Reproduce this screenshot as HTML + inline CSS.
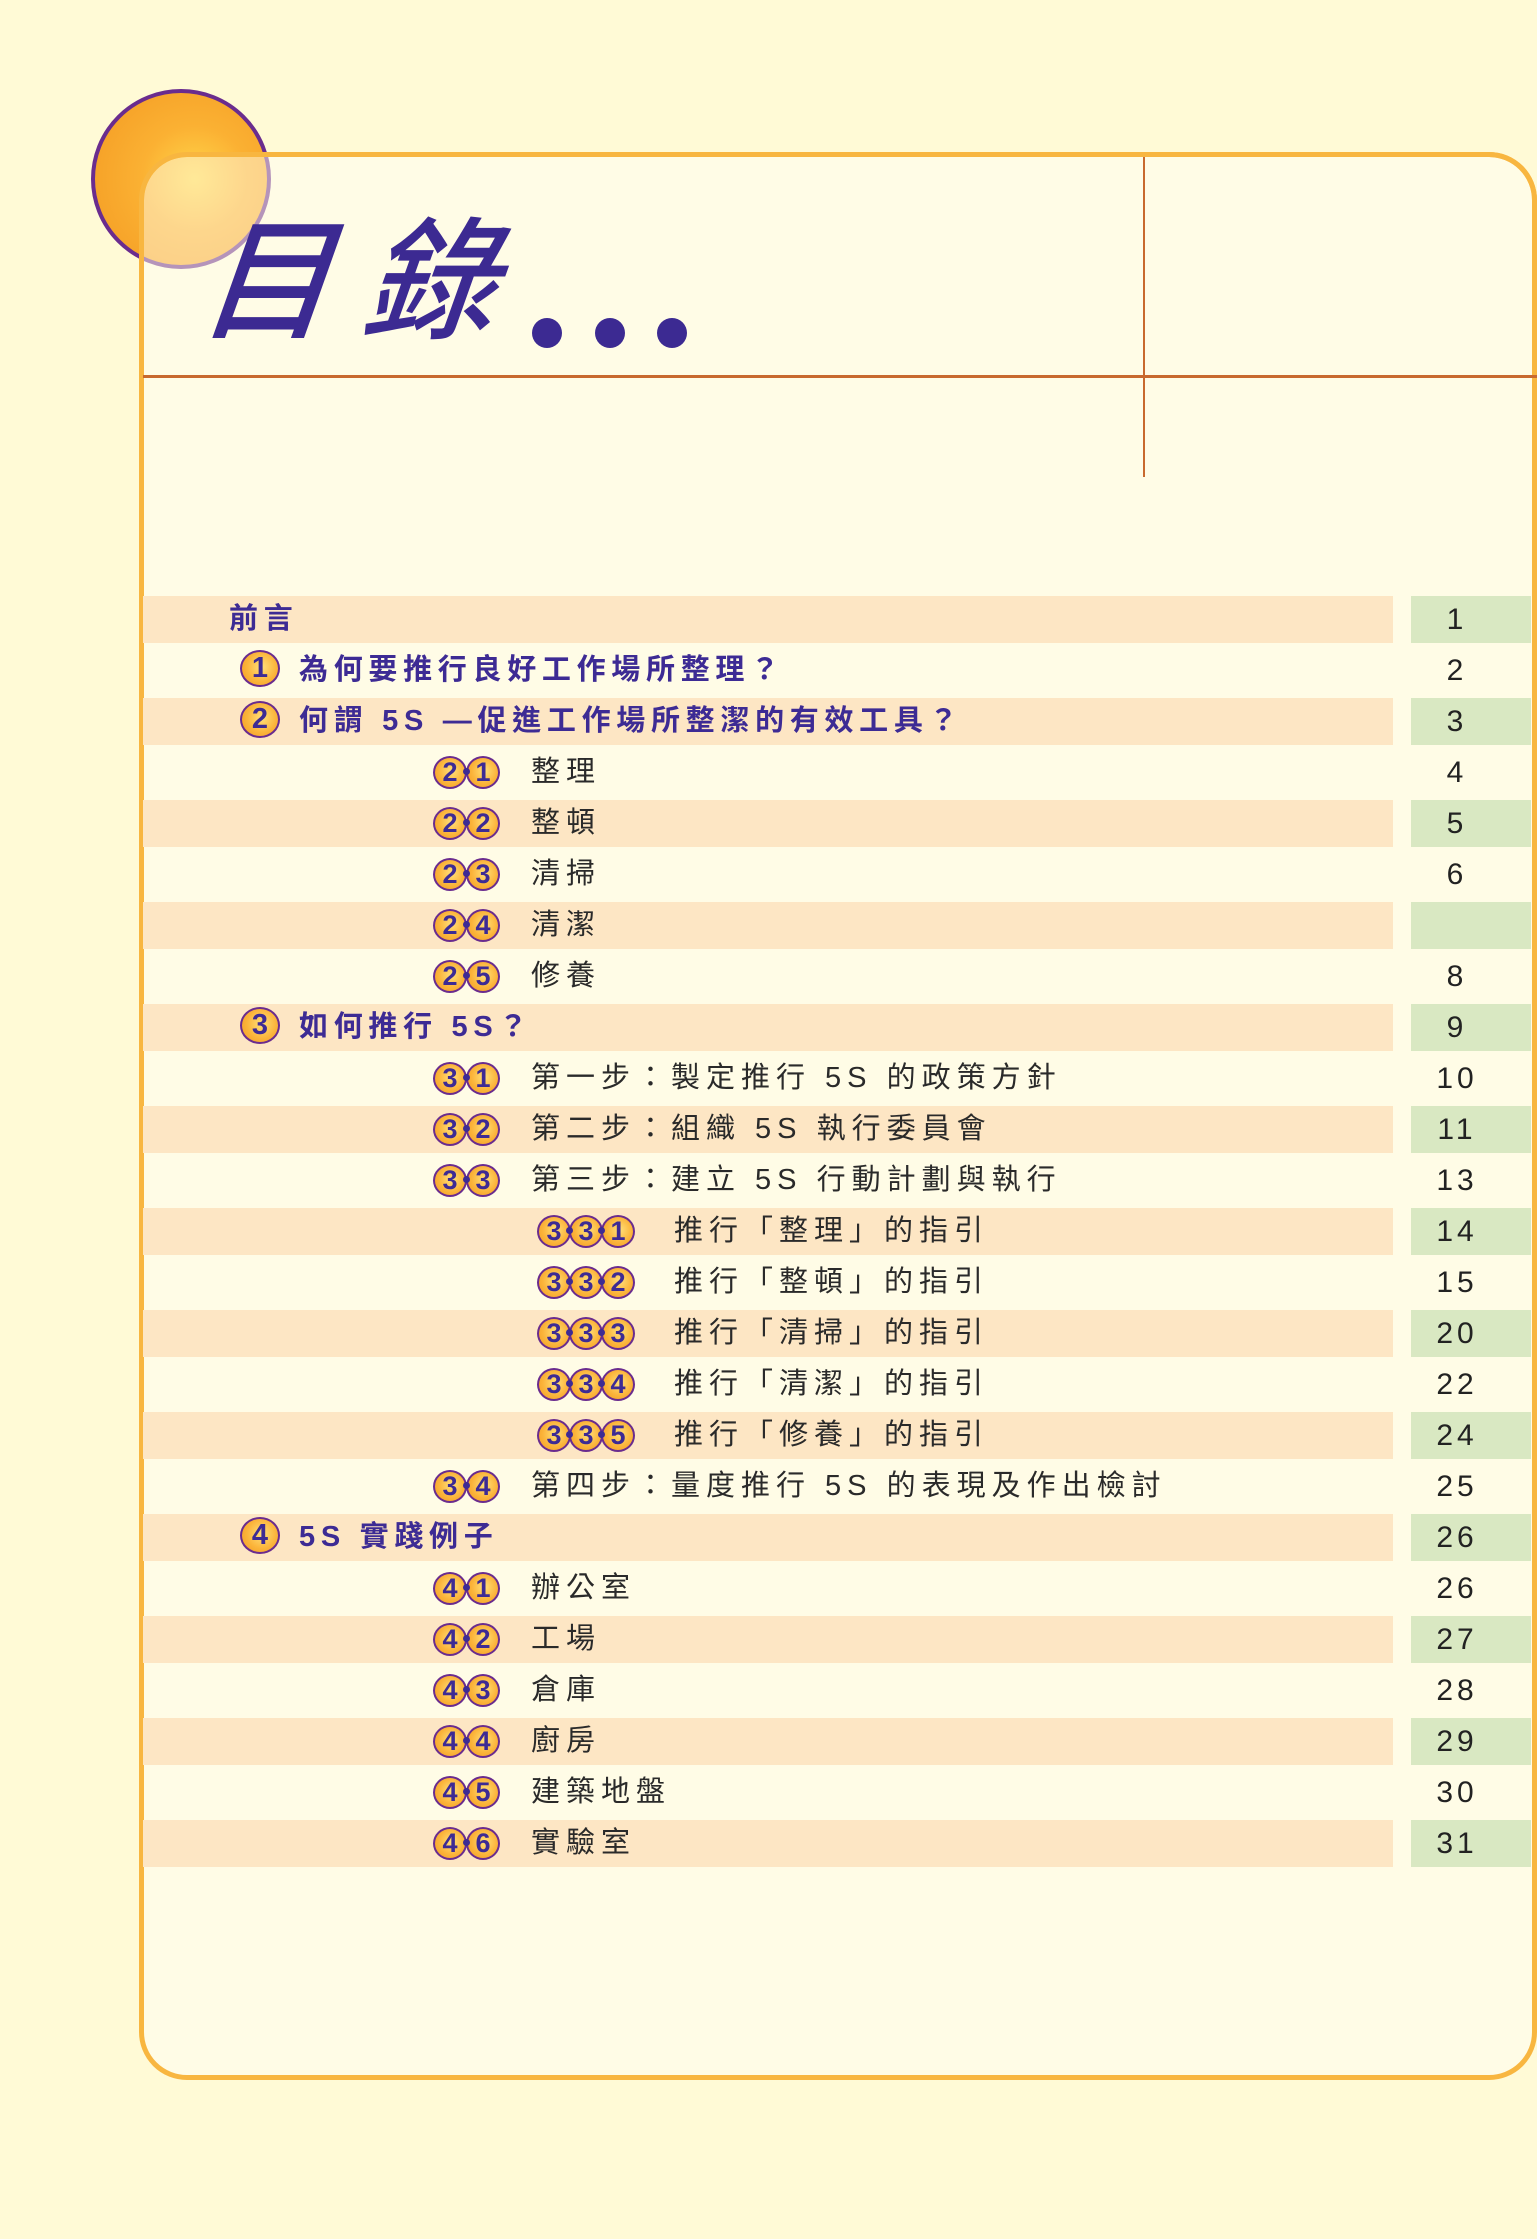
<!DOCTYPE html>
<html><head><meta charset="utf-8">
<style>
html,body{margin:0;padding:0}
body{width:1537px;height:2239px;background:#fffad6;position:relative;overflow:hidden;font-family:"Liberation Sans","Noto Sans CJK TC",sans-serif}
.circ{position:absolute;left:91px;top:89px;width:180px;height:180px;border-radius:50%;border:4px solid #6a2c8e;box-sizing:border-box;background:radial-gradient(circle at 58% 50%,#ffd64a 0%,#fbb133 40%,#f39a22 100%)}
.panel{position:absolute;left:139px;top:152px;width:1398px;height:1928px;box-sizing:border-box;border:5px solid #f8b640;border-radius:48px;background:#fffce6}
.pborder{position:absolute;left:139px;top:152px;width:1398px;height:300px;box-sizing:border-box;border:5px solid #f8b640;border-bottom:none;border-radius:48px 48px 0 0}
.veil{position:absolute;left:144px;top:157px;width:140px;height:130px;border-top-left-radius:43px;background:rgba(255,252,230,0.5)}
.hl{position:absolute;left:143px;top:375px;width:1394px;height:3px;background:#c8692e}
.vl{position:absolute;left:1143px;top:157px;width:2px;height:320px;background:#c8692e}
.title{position:absolute;left:202px;top:206px;font-family:"Noto Sans CJK TC","Liberation Sans",sans-serif;font-size:132px;line-height:1;color:#3c2a92;font-style:italic;font-weight:500;letter-spacing:32px;transform:skewX(-6deg)}
.dots{position:absolute;top:318px;width:30px;height:30px;border-radius:50%;background:#3c2a92}
.stripe{position:absolute;left:143px;width:1250px;height:47px;background:#fde6c4}
.green{position:absolute;left:1411px;width:120px;height:47px;background:#d9e8c2}
.num{position:absolute;left:1397px;width:120px;text-align:center;font-size:30px;letter-spacing:4px;color:#222;line-height:47px}
.t{position:absolute;line-height:47px;font-family:"Liberation Sans","Noto Sans CJK TC",sans-serif;white-space:nowrap}
.l0,.l1{color:#3d2b94;font-weight:bold;font-size:29px;letter-spacing:5.7px}
.l2,.l3{color:#2a2a2a;font-size:29px;letter-spacing:6px}
.b{position:absolute;width:34px;height:33px;border-radius:50%;box-sizing:border-box;border:2.5px solid #6a2c8e;background:radial-gradient(circle at 55% 45%,#ffe07a 0%,#fbb43a 55%,#f29a20 100%);color:#3d2b94;font-weight:bold;font-size:27px;text-align:center;line-height:29px;font-family:"Liberation Sans",sans-serif}
.b.big{width:40px;height:37px;font-size:29px;line-height:33px}
.dot{position:absolute;width:7px;height:7px;border-radius:50%;background:#3d2b94}
</style></head><body>
<div class="panel"></div>
<div class="circ"></div>
<div class="veil"></div>
<div class="pborder"></div>
<div class="hl"></div>
<div class="vl"></div>
<div class="title">目錄</div>
<div class="dots" style="left:532px"></div>
<div class="dots" style="left:595px"></div>
<div class="dots" style="left:657px"></div>

<div class="stripe" style="top:596px"></div><div class="green" style="top:596px"></div>
<div class="t l0" style="left:229px;top:596px">前言</div><div class="num" style="top:596px">1</div>

<div class="b big" style="left:240px;top:650px">1</div>
<div class="t l1" style="left:299px;top:647px">為何要推行良好工作場所整理？</div><div class="num" style="top:647px">2</div>

<div class="stripe" style="top:698px"></div><div class="green" style="top:698px"></div>
<div class="b big" style="left:240px;top:701px">2</div>
<div class="t l1" style="left:299px;top:698px">何謂 5S —促進工作場所整潔的有效工具？</div><div class="num" style="top:698px">3</div>

<div class="b" style="left:433px;top:756px">2</div><div class="b" style="left:466px;top:756px">1</div><div class="dot" style="left:463px;top:768px"></div>
<div class="t l2" style="left:531px;top:749px">整理</div><div class="num" style="top:749px">4</div>

<div class="stripe" style="top:800px"></div><div class="green" style="top:800px"></div>
<div class="b" style="left:433px;top:807px">2</div><div class="b" style="left:466px;top:807px">2</div><div class="dot" style="left:463px;top:819px"></div>
<div class="t l2" style="left:531px;top:800px">整頓</div><div class="num" style="top:800px">5</div>

<div class="b" style="left:433px;top:858px">2</div><div class="b" style="left:466px;top:858px">3</div><div class="dot" style="left:463px;top:870px"></div>
<div class="t l2" style="left:531px;top:851px">清掃</div><div class="num" style="top:851px">6</div>

<div class="stripe" style="top:902px"></div><div class="green" style="top:902px"></div>
<div class="b" style="left:433px;top:909px">2</div><div class="b" style="left:466px;top:909px">4</div><div class="dot" style="left:463px;top:921px"></div>
<div class="t l2" style="left:531px;top:902px">清潔</div>

<div class="b" style="left:433px;top:960px">2</div><div class="b" style="left:466px;top:960px">5</div><div class="dot" style="left:463px;top:972px"></div>
<div class="t l2" style="left:531px;top:953px">修養</div><div class="num" style="top:953px">8</div>

<div class="stripe" style="top:1004px"></div><div class="green" style="top:1004px"></div>
<div class="b big" style="left:240px;top:1007px">3</div>
<div class="t l1" style="left:299px;top:1004px">如何推行 5S？</div><div class="num" style="top:1004px">9</div>

<div class="b" style="left:433px;top:1062px">3</div><div class="b" style="left:466px;top:1062px">1</div><div class="dot" style="left:463px;top:1074px"></div>
<div class="t l2" style="left:531px;top:1055px">第一步：製定推行 5S 的政策方針</div><div class="num" style="top:1055px">10</div>

<div class="stripe" style="top:1106px"></div><div class="green" style="top:1106px"></div>
<div class="b" style="left:433px;top:1113px">3</div><div class="b" style="left:466px;top:1113px">2</div><div class="dot" style="left:463px;top:1125px"></div>
<div class="t l2" style="left:531px;top:1106px">第二步：組織 5S 執行委員會</div><div class="num" style="top:1106px">11</div>

<div class="b" style="left:433px;top:1164px">3</div><div class="b" style="left:466px;top:1164px">3</div><div class="dot" style="left:463px;top:1176px"></div>
<div class="t l2" style="left:531px;top:1157px">第三步：建立 5S 行動計劃與執行</div><div class="num" style="top:1157px">13</div>

<div class="stripe" style="top:1208px"></div><div class="green" style="top:1208px"></div>
<div class="b" style="left:537px;top:1215px">3</div><div class="b" style="left:569px;top:1215px">3</div><div class="b" style="left:601px;top:1215px">1</div><div class="dot" style="left:566px;top:1227px"></div><div class="dot" style="left:598px;top:1227px"></div>
<div class="t l3" style="left:674px;top:1208px">推行「整理」的指引</div><div class="num" style="top:1208px">14</div>

<div class="b" style="left:537px;top:1266px">3</div><div class="b" style="left:569px;top:1266px">3</div><div class="b" style="left:601px;top:1266px">2</div><div class="dot" style="left:566px;top:1278px"></div><div class="dot" style="left:598px;top:1278px"></div>
<div class="t l3" style="left:674px;top:1259px">推行「整頓」的指引</div><div class="num" style="top:1259px">15</div>

<div class="stripe" style="top:1310px"></div><div class="green" style="top:1310px"></div>
<div class="b" style="left:537px;top:1317px">3</div><div class="b" style="left:569px;top:1317px">3</div><div class="b" style="left:601px;top:1317px">3</div><div class="dot" style="left:566px;top:1329px"></div><div class="dot" style="left:598px;top:1329px"></div>
<div class="t l3" style="left:674px;top:1310px">推行「清掃」的指引</div><div class="num" style="top:1310px">20</div>

<div class="b" style="left:537px;top:1368px">3</div><div class="b" style="left:569px;top:1368px">3</div><div class="b" style="left:601px;top:1368px">4</div><div class="dot" style="left:566px;top:1380px"></div><div class="dot" style="left:598px;top:1380px"></div>
<div class="t l3" style="left:674px;top:1361px">推行「清潔」的指引</div><div class="num" style="top:1361px">22</div>

<div class="stripe" style="top:1412px"></div><div class="green" style="top:1412px"></div>
<div class="b" style="left:537px;top:1419px">3</div><div class="b" style="left:569px;top:1419px">3</div><div class="b" style="left:601px;top:1419px">5</div><div class="dot" style="left:566px;top:1431px"></div><div class="dot" style="left:598px;top:1431px"></div>
<div class="t l3" style="left:674px;top:1412px">推行「修養」的指引</div><div class="num" style="top:1412px">24</div>

<div class="b" style="left:433px;top:1470px">3</div><div class="b" style="left:466px;top:1470px">4</div><div class="dot" style="left:463px;top:1482px"></div>
<div class="t l2" style="left:531px;top:1463px">第四步：量度推行 5S 的表現及作出檢討</div><div class="num" style="top:1463px">25</div>

<div class="stripe" style="top:1514px"></div><div class="green" style="top:1514px"></div>
<div class="b big" style="left:240px;top:1517px">4</div>
<div class="t l1" style="left:299px;top:1514px">5S 實踐例子</div><div class="num" style="top:1514px">26</div>

<div class="b" style="left:433px;top:1572px">4</div><div class="b" style="left:466px;top:1572px">1</div><div class="dot" style="left:463px;top:1584px"></div>
<div class="t l2" style="left:531px;top:1565px">辦公室</div><div class="num" style="top:1565px">26</div>

<div class="stripe" style="top:1616px"></div><div class="green" style="top:1616px"></div>
<div class="b" style="left:433px;top:1623px">4</div><div class="b" style="left:466px;top:1623px">2</div><div class="dot" style="left:463px;top:1635px"></div>
<div class="t l2" style="left:531px;top:1616px">工場</div><div class="num" style="top:1616px">27</div>

<div class="b" style="left:433px;top:1674px">4</div><div class="b" style="left:466px;top:1674px">3</div><div class="dot" style="left:463px;top:1686px"></div>
<div class="t l2" style="left:531px;top:1667px">倉庫</div><div class="num" style="top:1667px">28</div>

<div class="stripe" style="top:1718px"></div><div class="green" style="top:1718px"></div>
<div class="b" style="left:433px;top:1725px">4</div><div class="b" style="left:466px;top:1725px">4</div><div class="dot" style="left:463px;top:1737px"></div>
<div class="t l2" style="left:531px;top:1718px">廚房</div><div class="num" style="top:1718px">29</div>

<div class="b" style="left:433px;top:1776px">4</div><div class="b" style="left:466px;top:1776px">5</div><div class="dot" style="left:463px;top:1788px"></div>
<div class="t l2" style="left:531px;top:1769px">建築地盤</div><div class="num" style="top:1769px">30</div>

<div class="stripe" style="top:1820px"></div><div class="green" style="top:1820px"></div>
<div class="b" style="left:433px;top:1827px">4</div><div class="b" style="left:466px;top:1827px">6</div><div class="dot" style="left:463px;top:1839px"></div>
<div class="t l2" style="left:531px;top:1820px">實驗室</div><div class="num" style="top:1820px">31</div>
</body></html>
